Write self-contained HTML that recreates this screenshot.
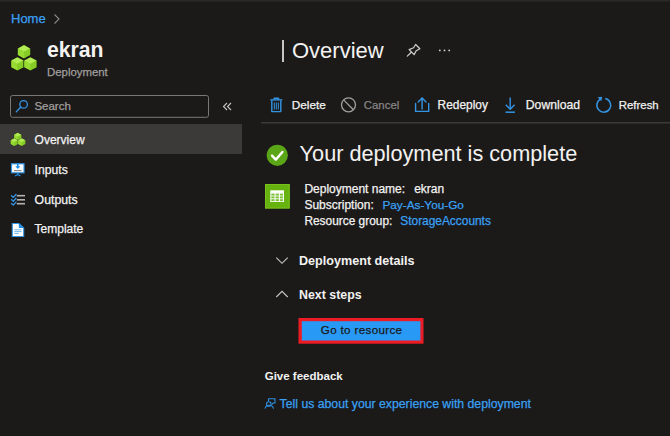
<!DOCTYPE html>
<html><head><meta charset="utf-8">
<style>
*{margin:0;padding:0;box-sizing:border-box}
html,body{width:670px;height:436px;overflow:hidden;background:#1b1a19;font-family:"Liberation Sans",sans-serif;color:#f3f2f1}
.a{position:absolute;white-space:nowrap;line-height:1;-webkit-text-stroke:0.25px currentColor}
svg.a{overflow:visible}
.lnk{color:#3aa0f3}
</style></head><body>
<div class="a" style="left:0;top:0;width:670px;height:1px;background:#2a2928"></div>
<div class="a" style="left:0;top:1px;width:670px;height:1px;background:#222120"></div>

<!-- breadcrumb -->
<div class="a lnk" id="t_home" style="left:11px;top:12px;font-size:13px">Home</div>
<svg class="a" style="left:0;top:0" width="670" height="436">
  <!-- breadcrumb chevron -->
  <path d="M54.5 14.5 L59 19 L54.5 23.5" stroke="#8a8886" stroke-width="1.1" fill="none"/>

  <!-- big cube icon -->
  <path d="M24 45 L30.2 48.4 L30.2 55.0 L24 58.4 L17.8 55.0 L17.8 48.4Z" fill="#86cc26" stroke="#141312" stroke-width="1.0" stroke-linejoin="round"/><path d="M24 45 L30.2 48.4 L24 51.8 L17.8 48.4Z" fill="#b0ec52"/><path d="M17.8 48.4 L24 51.8 L24 58.4 L17.8 55.0Z" fill="#98dc32"/><path d="M30.2 48.4 L24 51.8 L24 58.4 L30.2 55.0Z" fill="#86cc26"/><path d="M17.4 57.2 L23.599999999999998 60.6 L23.599999999999998 67.2 L17.4 70.60000000000001 L11.2 67.2 L11.2 60.6Z" fill="#86cc26" stroke="#141312" stroke-width="1.0" stroke-linejoin="round"/><path d="M17.4 57.2 L23.599999999999998 60.6 L17.4 64.0 L11.2 60.6Z" fill="#b0ec52"/><path d="M11.2 60.6 L17.4 64.0 L17.4 70.60000000000001 L11.2 67.2Z" fill="#98dc32"/><path d="M23.599999999999998 60.6 L17.4 64.0 L17.4 70.60000000000001 L23.599999999999998 67.2Z" fill="#86cc26"/><path d="M30.4 57.2 L36.6 60.6 L36.6 67.2 L30.4 70.60000000000001 L24.2 67.2 L24.2 60.6Z" fill="#86cc26" stroke="#141312" stroke-width="1.0" stroke-linejoin="round"/><path d="M30.4 57.2 L36.6 60.6 L30.4 64.0 L24.2 60.6Z" fill="#b0ec52"/><path d="M24.2 60.6 L30.4 64.0 L30.4 70.60000000000001 L24.2 67.2Z" fill="#98dc32"/><path d="M36.6 60.6 L30.4 64.0 L30.4 70.60000000000001 L36.6 67.2Z" fill="#86cc26"/>

  <!-- search box -->
  <rect x="10.5" y="95.5" width="198" height="21.8" rx="2" fill="none" stroke="#7a7876" stroke-width="1"/>
  <circle cx="23.6" cy="104.4" r="3.8" fill="none" stroke="#3494e4" stroke-width="1.3"/>
  <path d="M20.9 107.1 L16.3 111.7" stroke="#3494e4" stroke-width="1.4" stroke-linecap="round"/>
  <!-- collapse chevrons -->
  <path d="M227 103 L223.5 106.5 L227 110 M231 103 L227.5 106.5 L231 110" stroke="#c8c6c4" stroke-width="1.1" fill="none"/>

  <!-- selected row -->
  <rect x="0" y="124" width="242" height="30" fill="#3b3a39"/>

  <!-- small cube icon -->
  <path d="M17.7 132.8 L21.3 134.8 L21.3 138.60000000000002 L17.7 140.60000000000002 L14.1 138.60000000000002 L14.1 134.8Z" fill="#86cc26" stroke="#2a2928" stroke-width="0.6" stroke-linejoin="round"/><path d="M17.7 132.8 L21.3 134.8 L17.7 136.8 L14.1 134.8Z" fill="#b0ec52"/><path d="M14.1 134.8 L17.7 136.8 L17.7 140.60000000000002 L14.1 138.60000000000002Z" fill="#98dc32"/><path d="M21.3 134.8 L17.7 136.8 L17.7 140.60000000000002 L21.3 138.60000000000002Z" fill="#86cc26"/><path d="M14.3 138.3 L17.900000000000002 140.3 L17.900000000000002 144.10000000000002 L14.3 146.10000000000002 L10.700000000000001 144.10000000000002 L10.700000000000001 140.3Z" fill="#86cc26" stroke="#2a2928" stroke-width="0.6" stroke-linejoin="round"/><path d="M14.3 138.3 L17.900000000000002 140.3 L14.3 142.3 L10.700000000000001 140.3Z" fill="#b0ec52"/><path d="M10.700000000000001 140.3 L14.3 142.3 L14.3 146.10000000000002 L10.700000000000001 144.10000000000002Z" fill="#98dc32"/><path d="M17.900000000000002 140.3 L14.3 142.3 L14.3 146.10000000000002 L17.900000000000002 144.10000000000002Z" fill="#86cc26"/><path d="M21.7 138.3 L25.3 140.3 L25.3 144.10000000000002 L21.7 146.10000000000002 L18.099999999999998 144.10000000000002 L18.099999999999998 140.3Z" fill="#86cc26" stroke="#2a2928" stroke-width="0.6" stroke-linejoin="round"/><path d="M21.7 138.3 L25.3 140.3 L21.7 142.3 L18.099999999999998 140.3Z" fill="#b0ec52"/><path d="M18.099999999999998 140.3 L21.7 142.3 L21.7 146.10000000000002 L18.099999999999998 144.10000000000002Z" fill="#98dc32"/><path d="M25.3 140.3 L21.7 142.3 L21.7 146.10000000000002 L25.3 144.10000000000002Z" fill="#86cc26"/>

  <!-- inputs icon -->
  <rect x="11.5" y="163.8" width="12.5" height="9" fill="#ffffff" stroke="#3494e4" stroke-width="1.2"/>
  <path d="M17.8 163 V168" stroke="#1e8fe8" stroke-width="1.6"/>
  <path d="M15.3 166.2 L17.8 169 L20.3 166.2Z" fill="#1e8fe8"/>
  <rect x="14" y="170" width="7.5" height="1.2" fill="#8a8886"/>
  <path d="M17.8 173 V175.5 M15 176 L17.8 174.5 L20.6 176" stroke="#1e8fe8" stroke-width="1.2" fill="none"/>

  <!-- outputs icon -->
  <g stroke="#3494e4" stroke-width="1.3" fill="none" stroke-linecap="round" stroke-linejoin="round">
    <path d="M11.5 195.8 L13.3 197.4 L16 194.5"/>
    <path d="M11.5 199.6 L13.3 201.2 L16 198.3"/>
    <path d="M11.5 203.4 L13.3 205 L16 202.1"/>
  </g>
  <g fill="#b3b1af">
    <rect x="16.8" y="194.9" width="8.2" height="1.6"/>
    <rect x="16.8" y="199" width="8.2" height="1.6"/>
    <rect x="16.8" y="202.9" width="8.2" height="1.6"/>
  </g>

  <!-- template icon -->
  <path d="M12.3 223.5 H18.8 L23.7 228 V236.5 H12.3Z" fill="#ffffff" stroke="#3494e4" stroke-width="1.1"/>
  <path d="M18.8 223.5 V228 H23.7Z" fill="#1e8fe8"/>
  <g fill="#6fb6ee">
    <rect x="14.3" y="229.3" width="7.2" height="1"/>
    <rect x="14.3" y="231.1" width="7.2" height="1"/>
    <rect x="14.3" y="232.9" width="4.5" height="1"/>
  </g>

  <!-- title bar -->
  <rect x="282" y="40" width="2" height="22" fill="#c8c6c4"/>
  <!-- pin -->
  <g fill="none" stroke="#d2d0ce" stroke-width="1.2" stroke-linejoin="round">
    <path d="M415.6 44.5 L419.9 48.7 L416.2 50.8 L414.1 54.6 L409.1 49.6 L413.6 47.8Z"/>
    <path d="M411.5 52 L407.3 56.2" stroke-linecap="round"/>
  </g>
  <!-- ellipsis -->
  <g fill="#d2d0ce">
    <circle cx="439.8" cy="50.4" r="0.9"/>
    <circle cx="444.5" cy="50.4" r="0.9"/>
    <circle cx="449.2" cy="50.4" r="0.9"/>
  </g>

  <!-- toolbar icons -->
  <g fill="none" stroke="#3494e4" stroke-width="1.4" stroke-linejoin="round">
    <path d="M270.3 99.9 H282.3"/>
    <path d="M274.2 99.5 V98.2 H278.6 V99.5"/>
    <path d="M271.8 100.5 V111.6 H280.8 V100.5"/>
    <path d="M274.3 102.5 V109.5 M276.3 102.5 V109.5 M278.3 102.5 V109.5" stroke-width="1"/>
  </g>
  <g fill="none" stroke="#a19f9d" stroke-width="1.3">
    <circle cx="348.5" cy="104.8" r="7"/>
    <path d="M343.6 99.9 L353.4 109.7"/>
  </g>
  <g fill="none" stroke="#3494e4" stroke-width="1.4" stroke-linejoin="round">
    <path d="M415.6 103.4 V111.4 H428.7 V103.4" stroke-linecap="round"/>
    <path d="M422.1 109 V98.3" stroke-linecap="round"/>
    <path d="M418.2 101.9 L422.1 98 L426 101.9" stroke-linecap="round"/>
  </g>
  <g fill="none" stroke="#3494e4" stroke-width="1.4" stroke-linejoin="round">
    <path d="M510.2 97.5 V109"/>
    <path d="M505.8 104.8 L510.2 109.2 L514.6 104.8"/>
    <path d="M505.5 112.2 H514.9" stroke-width="1.5"/>
  </g>
  <g fill="none" stroke="#3494e4" stroke-width="1.5">
    <path d="M605.3 98.5 A6.9 6.9 0 1 1 600.6 99.1"/>
  </g>
  <path d="M597.6 97.3 L602.2 96.8 L601.3 101.2Z" fill="#3494e4"/>

  <!-- toolbar separator -->
  <rect x="261" y="122" width="409" height="1.5" fill="#3b3a39"/>

  <!-- success check -->
  <circle cx="277.3" cy="155.3" r="10.6" fill="#5ba616"/>
  <path d="M272 155.6 L275.8 159.6 L282.4 152" stroke="#ffffff" stroke-width="2.4" fill="none" stroke-linecap="round" stroke-linejoin="round"/>

  <!-- green table icon -->
  <rect x="265" y="184" width="24.7" height="24.5" fill="#66b20e"/>
  <rect x="265.5" y="184.5" width="23.7" height="23.5" fill="none" stroke="#78c01c" stroke-width="1"/>
  <rect x="270.3" y="190.3" width="13.7" height="11.7" fill="#ffffff"/>
  <g fill="#7fc23a">
    <rect x="271.3" y="193.6" width="3.3" height="2"/>
    <rect x="275.6" y="193.6" width="3.3" height="2"/>
    <rect x="279.9" y="193.6" width="3.1" height="2"/>
    <rect x="271.3" y="196.4" width="3.3" height="2"/>
    <rect x="275.6" y="196.4" width="3.3" height="2"/>
    <rect x="279.9" y="196.4" width="3.1" height="2"/>
    <rect x="271.3" y="199.2" width="3.3" height="2"/>
    <rect x="275.6" y="199.2" width="3.3" height="2"/>
    <rect x="279.9" y="199.2" width="3.1" height="2"/>
  </g>

  <!-- chevrons -->
  <path d="M276.3 257.6 L282 263.3 L287.7 257.6" stroke="#c8c6c4" stroke-width="1.1" fill="none"/>
  <path d="M276.3 297 L282 291.3 L287.7 297" stroke="#c8c6c4" stroke-width="1.1" fill="none"/>

  <!-- button -->
  <rect x="298.5" y="318" width="125" height="25.7" fill="#ed1c24"/>
  <rect x="301.8" y="321.2" width="118.6" height="19.3" fill="#2899f5"/>

  <!-- feedback icon -->
  <g fill="none" stroke="#2f8fe0" stroke-width="1.1" stroke-linejoin="round">
    <circle cx="268.8" cy="404" r="2.3"/>
    <path d="M265 408.6 C265.5 405.8 267.5 405.2 269.3 405.2 C271.1 405.2 273 405.8 273.5 408.6"/>
    <path d="M268.5 401.2 V398.7 H275 V403 H273.3 L271.8 404.4"/>
  </g>
</svg>

<div class="a" id="t_ekran" style="-webkit-text-stroke:0;left:47px;top:39px;font-size:21.2px;font-weight:bold">ekran</div>
<div class="a" id="t_dep" style="left:47px;top:67px;font-size:11.4px;color:#a19f9d">Deployment</div>

<div class="a" id="t_search" style="left:34.4px;top:101px;font-size:11.5px;color:#a19f9d">Search</div>

<div class="a" id="t_ov" style="left:34.6px;top:134px;font-size:12px">Overview</div>
<div class="a" id="t_in" style="left:34.6px;top:164px;font-size:12.2px">Inputs</div>
<div class="a" id="t_out" style="left:34.6px;top:194px;font-size:12.3px">Outputs</div>
<div class="a" id="t_tpl" style="left:34.6px;top:223px;font-size:12px">Template</div>

<div class="a" id="t_title" style="-webkit-text-stroke:0;left:292px;top:40px;font-size:22px">Overview</div>

<div class="a" id="t_del" style="left:291.7px;top:100px;font-size:11.8px">Delete</div>
<div class="a" id="t_can" style="left:363.8px;top:100px;font-size:11.4px;color:#868483">Cancel</div>
<div class="a" id="t_red" style="left:437.6px;top:100px;font-size:11.9px">Redeploy</div>
<div class="a" id="t_dl" style="left:525.8px;top:99px;font-size:12.2px">Download</div>
<div class="a" id="t_ref" style="left:618.8px;top:100px;font-size:11.4px">Refresh</div>

<div class="a" id="t_head" style="-webkit-text-stroke:0;left:299.6px;top:143px;font-size:21.7px">Your deployment is complete</div>

<div class="a" id="t_i1" style="left:304.4px;top:183px;font-size:12px">Deployment name:</div>
<div class="a" id="t_i1v" style="left:414.2px;top:183px;font-size:12px">ekran</div>
<div class="a" id="t_i2" style="left:304.4px;top:199px;font-size:12px">Subscription:</div>
<div class="a lnk" id="t_i2v" style="left:382.4px;top:199.5px;font-size:11.8px">Pay-As-You-Go</div>
<div class="a" id="t_i3" style="left:304.4px;top:216px;font-size:11.9px">Resource group:</div>
<div class="a lnk" id="t_i3v" style="left:400.3px;top:216px;font-size:11.9px">StorageAccounts</div>

<div class="a" id="t_dd" style="-webkit-text-stroke:0;left:299px;top:255px;font-size:12.6px;font-weight:bold">Deployment details</div>
<div class="a" id="t_ns" style="-webkit-text-stroke:0;left:299px;top:289px;font-size:12.4px;font-weight:bold">Next steps</div>

<div class="a" id="t_go" style="left:320.8px;top:324px;font-size:11.6px;letter-spacing:0.35px;color:#1b1a19">Go to resource</div>

<div class="a" id="t_gf" style="-webkit-text-stroke:0;left:264.7px;top:371px;font-size:11.5px;font-weight:bold">Give feedback</div>
<div class="a lnk" id="t_tell" style="left:279.6px;top:398px;font-size:12.25px">Tell us about your experience with deployment</div>
</body></html>
